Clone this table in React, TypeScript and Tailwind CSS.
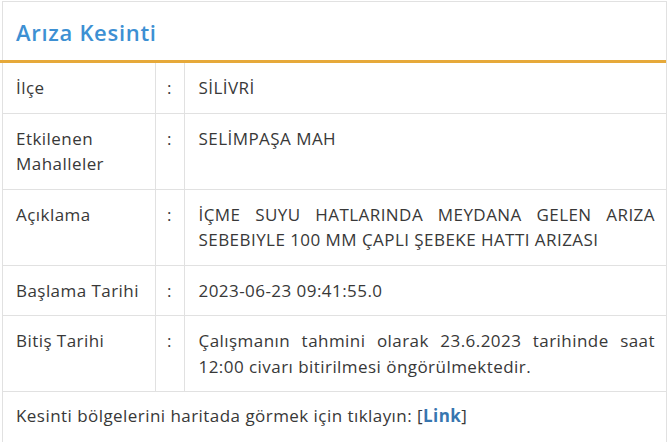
import React from 'react';

const ROWS = [
    { label: 'İlçe', value: 'SİLİVRİ' },
    { label: 'Etkilenen Mahalleler', value: 'SELİMPAŞA MAH' },
    { label: 'Açıklama', value: 'İÇME SUYU HATLARINDA MEYDANA GELEN ARIZA SEBEBIYLE 100 MM ÇAPLI ŞEBEKE HATTI ARIZASI' },
    { label: 'Başlama Tarihi', value: '2023-06-23 09:41:55.0' },
    { label: 'Bitiş Tarihi', value: 'Çalışmanın tahmini olarak 23.6.2023 tarihinde saat 12:00 civarı bitirilmesi öngörülmektedir.' }
];

const App: React.FC = () => {
    return (
        <div className="w-[669px] h-[442px] overflow-hidden bg-white pt-[1px] pl-[2px] pr-[2px] font-['Open_Sans',sans-serif] text-[17px] tracking-[0.45px] text-[#383838]">
            <div className="border border-[#e1e1e1] border-b-0">
                <div className="h-[61px] flex items-center border-b-[3px] border-[#e6a93a] -ml-[3px] pl-[16px] pt-[1px]">
                    <h1 className="text-[22px] tracking-[0.7px] font-semibold text-[#3d90d3] leading-none">Arıza Kesinti</h1>
                </div>

                <table className="w-full border-collapse table-fixed">
                    <colgroup>
                        <col className="w-[152px]" />
                        <col className="w-[29px]" />
                        <col />
                    </colgroup>
                    <tbody>
                        {ROWS.map(row => (
                            <tr key={row.label} className="border-b border-[#e1e1e1] align-top leading-[25.5px]">
                                <td className="pl-[13px] pr-2 pt-[12px] pb-[12px] border-r border-[#e1e1e1]">{row.label}</td>
                                <td className="text-center pt-[12px] pb-[12px] border-r border-[#e1e1e1]">:</td>
                                <td className="pl-[14px] pr-[11px] pt-[12px] pb-[12px] text-justify">{row.value}</td>
                            </tr>
                        ))}
                    </tbody>
                </table>

                <div className="pl-[13px] pt-[11px] pb-[14px] leading-[25px]">
                    Kesinti bölgelerini haritada görmek için tıklayın: [<a href="#" className="font-bold text-[#3776b0]">Link</a>]
                </div>
            </div>
        </div>
    );
};

export default App;
